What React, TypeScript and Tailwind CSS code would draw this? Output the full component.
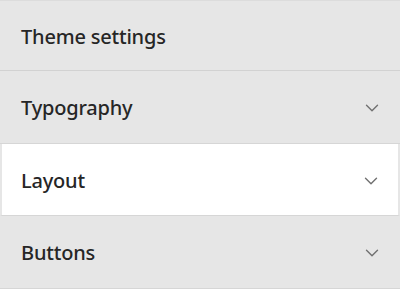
import { ChevronDown } from "lucide-react";

const rows = [
  { label: "Typography", active: false, h: "h-[73px]" },
  { label: "Layout", active: true, h: "h-[72px]" },
  { label: "Buttons", active: false, h: "h-[73px]" },
];

export default function App() {
  return (
    <div
      className="w-[400px] h-[289px] bg-[#e6e6e6] text-[#262626] overflow-hidden"
      style={{ fontFamily: '"Noto Sans", "Open Sans", sans-serif' }}
    >
      {/* Header */}
      <div className="h-[71px] border-t border-[#dcdcdc] border-b border-b-[#d2d2d2] flex items-center px-[21px] pt-[2px]">
        <span className="text-[20px] font-medium tracking-[-0.2px]">Theme settings</span>
      </div>
      {/* Sections */}
      {rows.map((row) => (
        <div
          key={row.label}
          className={
            row.active
              ? `${row.h} bg-white border-x-2 border-[#e6e6e6] border-b border-b-[#d6d6d6] flex items-center justify-between pl-[19px] pr-[16px] pt-[2px]`
              : `${row.h} border-b border-[#d6d6d6] flex items-center justify-between pl-[21px] pr-[17px] pt-[2px]`
          }
        >
          <span className="text-[20px] font-medium tracking-[-0.2px]">{row.label}</span>
          <ChevronDown className="w-[22px] h-[22px] text-[#707070]" strokeWidth={1.5} />
        </div>
      ))}
    </div>
  );
}
